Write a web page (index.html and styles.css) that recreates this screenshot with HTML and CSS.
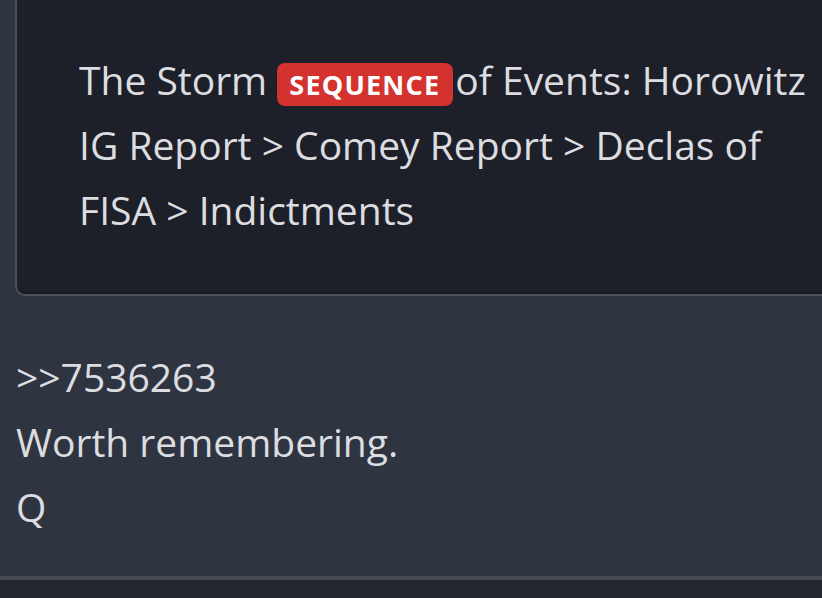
FILE: index.html
```html
<!DOCTYPE html>
<html>
<head>
<meta charset="utf-8">
<link rel="stylesheet" href="styles.css">
</head>
<body>
<div class="page">
  <div class="quote">
    <p class="quote-text">The Storm <span class="badge">SEQUENCE</span>of Events: Horowitz IG Report &gt; Comey Report &gt; Declas of FISA &gt; Indictments</p>
  </div>
  <div class="post">
    <p class="line">&gt;&gt;7536263</p>
    <p class="line">Worth remembering.</p>
    <p class="line">Q</p>
  </div>
  <div class="footer"></div>
</div>
</body>
</html>
```
FILE: styles.css
```css
html, body {
  margin: 0;
  padding: 0;
  height: 100%;
  overflow: hidden;
}
body {
  background: #2f3540;
  font-family: "Open Sans", "Noto Sans", sans-serif;
  color: #dcdde0;
}
.page {
  display: flex;
  flex-direction: column;
  height: 598px;
}
.quote {
  flex: 0 0 auto;
  margin-left: 15px;
  background: #1e2029;
  border-left: 2px solid #4b4f58;
  border-bottom: 2px solid #4b4f58;
  border-bottom-left-radius: 10px;
  box-shadow: inset 0 -2px 0 #171920;
  padding: 47px 0 52px 62px;
}
.quote-text {
  margin: 0;
  font-size: 39px;
  line-height: 65px;
}
.badge {
  display: inline-block;
  background: #d3322f;
  color: #ffffff;
  font-weight: 700;
  font-size: 27px;
  line-height: 43px;
  height: 43px;
  padding: 0 13px 0 12px;
  border-radius: 8px;
  vertical-align: 0px;
  letter-spacing: 1.2px;
  margin-right: 2px;
}
.post {
  flex: 0 0 auto;
  height: 280px;
  box-sizing: border-box;
  padding: 48px 0 0 16px;
}
.line {
  margin: 0;
  font-size: 39px;
  line-height: 65px;
}
.footer {
  flex: 1;
  background: #23262e;
  border-top: 4px solid #454a55;
}
```
